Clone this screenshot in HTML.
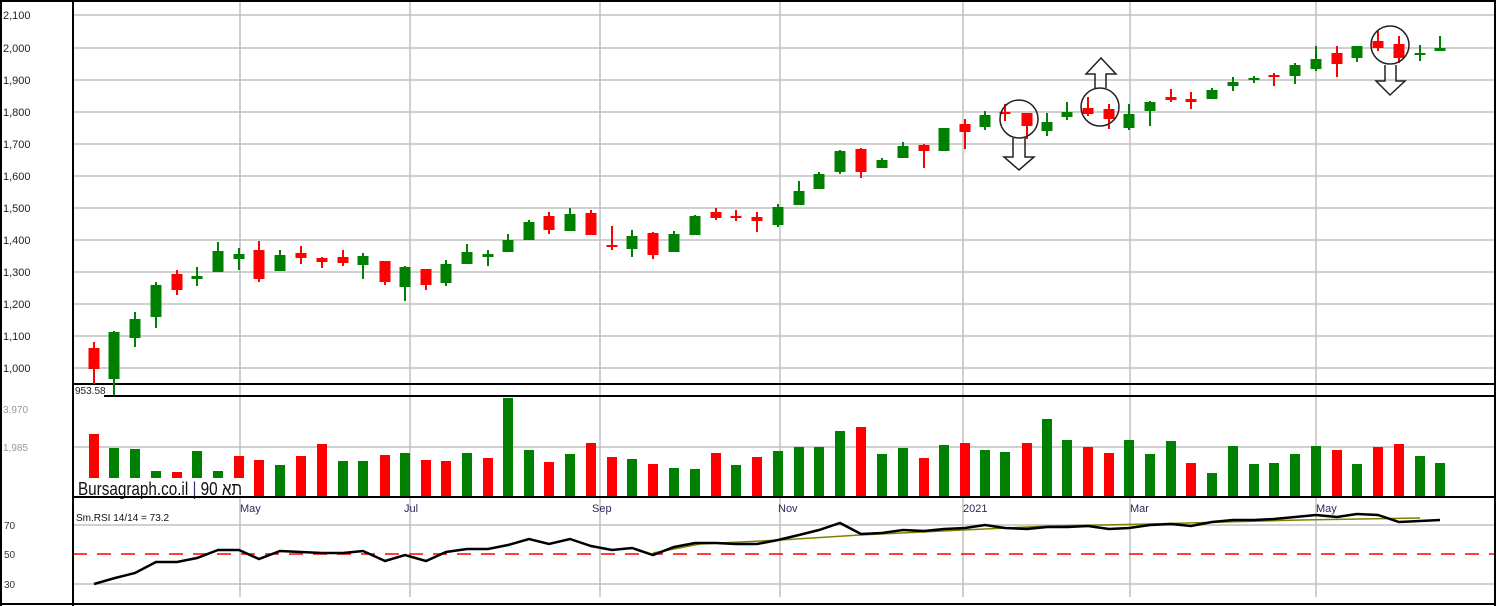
<!DOCTYPE html>
<html><head><meta charset="utf-8"><style>
html,body{margin:0;padding:0;background:#fff;}
svg{display:block;font-family:"Liberation Sans","Noto Sans CJK JP",sans-serif;}
</style></head><body>
<svg width="1496" height="606" viewBox="0 0 1496 606" xmlns="http://www.w3.org/2000/svg">
<rect width="1496" height="606" fill="#fff"/>
<g stroke="#c0c0c0" stroke-width="1.5" fill="none">
<path d="M73 15H1496M73 48H1496M73 80H1496M73 112H1496M73 144H1496M73 176H1496M73 208H1496M73 240H1496M73 272H1496M73 304H1496M73 336H1496M73 368H1496"/>
<path d="M73 447H1496M73 525H1496M73 584H1496"/>
<path d="M240 0V597M410 0V597M600 0V597M780 0V597M963 0V597M1130 0V597M1316 0V597"/>
</g>
<path d="M73 554H1496" stroke="#f00" stroke-width="1.5" stroke-dasharray="14,10"/>
<g stroke="#000" stroke-width="2" fill="none">
<path d="M1 0V606M0 1H1496M1495 0V606M0 604H1496"/>
<path d="M73 0V606"/>
<path d="M73 384H1496M104 396H1496M73 497H1496"/>
</g>
<g font-size="11" fill="#222">
<text x="3" y="19">2,100</text><text x="3" y="52">2,000</text><text x="3" y="84">1,900</text><text x="3" y="116">1,800</text><text x="3" y="148">1,700</text><text x="3" y="180">1,600</text><text x="3" y="212">1,500</text><text x="3" y="244">1,400</text><text x="3" y="276">1,300</text><text x="3" y="308">1,200</text><text x="3" y="340">1,100</text><text x="3" y="372">1,000</text>
</g>
<g font-size="10" fill="#999"><text x="3" y="413">3,970</text><text x="3" y="451">1,985</text></g>
<g font-size="10" fill="#333"><text x="4" y="529">70</text><text x="4" y="558">50</text><text x="4" y="588">30</text></g>
<text x="75" y="394" font-size="10" fill="#222">953.58</text>
<g font-size="11" fill="#2a2a5a"><text x="240" y="512">May</text><text x="404" y="512">Jul</text><text x="592" y="512">Sep</text><text x="778" y="512">Nov</text><text x="963" y="512">2021</text><text x="1130" y="512">Mar</text><text x="1316" y="512">May</text></g>
<g stroke="#f00" stroke-width="10">
<path d="M94 434V497M177 472V497M239 456V497M259 460V497M301 456V497M322 444V497M385 455V497M426 460V497M446 461V497M488 458V497M549 462V497M591 443V497M612 457V497M653 464V497M716 453V497M757 457V497M861 427V497M924 458V497M965 443V497M1027 443V497M1088 447V497M1109 453V497M1191 463V497M1337 450V497M1378 447V497M1399 444V497"/>
</g>
<g stroke="#008000" stroke-width="10">
<path d="M114 448V497M135 449V497M156 471V497M197 451V497M218 471V497M280 465V497M343 461V497M363 461V497M405 453V497M467 453V497M508 398V497M529 450V497M570 454V497M632 459V497M674 468V497M695 469V497M736 465V497M778 451V497M799 447V497M819 447V497M840 431V497M882 454V497M903 448V497M944 445V497M985 450V497M1005 452V497M1047 419V497M1067 440V497M1129 440V497M1150 454V497M1171 441V497M1212 473V497M1233 446V497M1254 464V497M1274 463V497M1295 454V497M1316 446V497M1357 464V497M1420 456V497M1440 463V497"/>
</g>
<rect x="75" y="478" width="170" height="18" fill="#fff"/>
<text x="78" y="495" font-size="18" fill="#111" textLength="164" lengthAdjust="spacingAndGlyphs">Bursagraph.co.il <tspan fill="#33337a">|</tspan> 90 תא</text>
<path d="M73 497H1496" stroke="#000" stroke-width="2"/>
<g stroke="#f00" fill="none">
<path stroke-width="2" d="M94 342V384M177 270V295M259 241V282M301 246V264M322 257V268M343 250V266M385 261V285M426 269V290M549 212V234M591 210V235M612 226V250M653 232V259M716 208V220M736 210V221M757 212V232M861 148V178M924 144V168M965 119V149M1005 104V121M1027 113V139M1088 97V116M1109 104V129M1171 89V102M1191 92V109M1274 73V86M1337 46V77M1378 30V51M1399 36V63"/>
<path stroke-width="11" d="M94 348V369M177 274V290M259 250V279M301 253V258M322 258V262M343 257V263M385 261V282M426 269V285M549 216V230M591 213V235M612 245V247M653 233V255M716 212V218M736 216V218M757 217V221M861 149V172M924 145V151M965 124V132M1005 112V114M1027 113V126M1088 108V114M1109 109V119M1171 97V100M1191 99V102M1274 75V77M1337 53V64M1378 41V48M1399 44V58"/>
</g>
<g stroke="#008000" fill="none">
<path stroke-width="2" d="M114 331V395M135 312V347M156 282V328M197 267V286M218 242V272M239 248V270M280 250V271M363 253V279M405 266V301M446 260V286M467 244V264M488 250V266M508 234V252M529 220V240M570 208V231M632 230V257M674 231V252M695 215V235M778 204V227M799 181V205M819 172V189M840 150V174M882 158V168M903 142V158M944 128V151M985 111V130M1047 113V136M1067 102V120M1129 104V130M1150 101V126M1212 88V99M1233 77V91M1254 76V83M1295 63V84M1316 46V71M1357 46V62M1420 45V61M1440 36V51"/>
<path stroke-width="11" d="M114 332V379M135 319V338M156 285V317M197 276V279M218 251V272M239 254V259M280 255V271M363 256V265M405 267V287M446 264V283M467 252V264M488 254V257M508 240V252M529 222V240M570 214V231M632 236V249M674 234V252M695 216V235M778 207V225M799 191V205M819 174V189M840 151V172M882 160V168M903 146V158M944 128V151M985 115V127M1047 122V131M1067 112V117M1129 114V128M1150 102V111M1212 90V99M1233 82V86M1254 78V80M1295 65V76M1316 59V69M1357 46V58M1420 53V55M1440 48V51"/>
</g>
<g stroke="#222" stroke-width="1.5" fill="none">
<circle cx="1019" cy="119" r="19"/>
<circle cx="1100" cy="107" r="19"/>
<circle cx="1390" cy="45" r="19"/>
<path d="M1013 138V157H1004L1019 170L1034 157H1025V138"/>
<path d="M1095 88V74H1086L1101 58L1116 74H1106V88"/>
<path d="M1385 65V81H1376L1390 95L1405 81H1396V65"/>
</g>
<text x="76" y="521" font-size="10" fill="#111">Sm.RSI 14/14 = 73.2</text>
<polyline fill="none" stroke="#808000" stroke-width="1.5" points="653,553 700,544 780,540 860,535 963,530 1050,526 1150,524 1300,520 1420,518"/>
<polyline fill="none" stroke="#000" stroke-width="2.5" points="94,584 115,578 135,573 156,562 177,562 197,558 218,550 239,550 259,559 280,551 301,552 322,553 343,553 363,551 385,561 405,555 426,561 446,552 467,549 488,549 508,545 529,539 549,544 570,539 591,546 612,550 632,548 653,555 674,547 695,543 716,543 736,544 757,544 778,540 799,535 819,530 840,523 861,534 882,533 903,530 924,531 944,529 965,528 985,525 1005,528 1027,529 1047,527 1067,527 1088,526 1109,529 1129,528 1150,525 1171,524 1191,526 1212,522 1233,520 1254,520 1274,519 1295,517 1316,515 1337,517 1357,514 1378,515 1399,522 1420,521 1440,520"/>
</svg>
</body></html>
